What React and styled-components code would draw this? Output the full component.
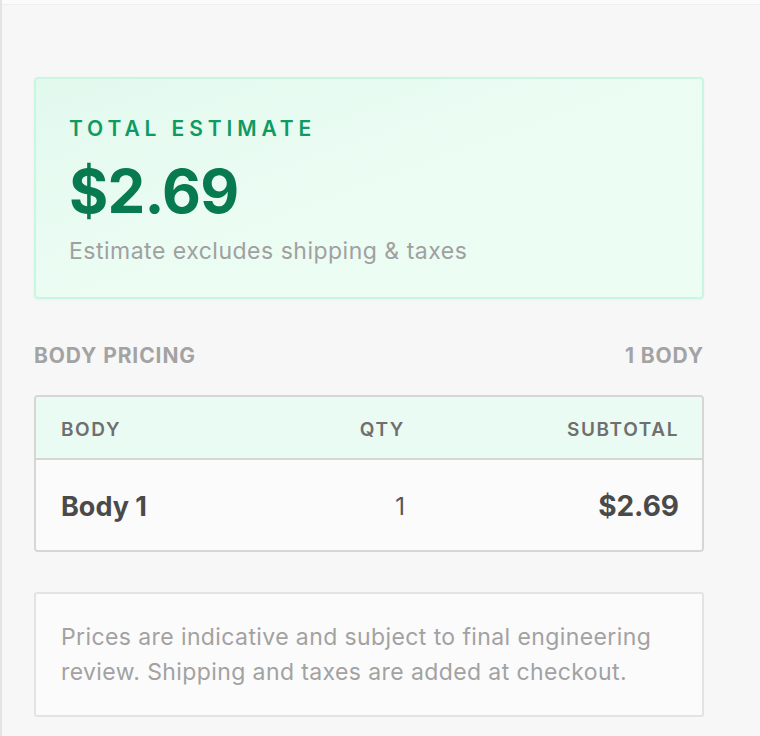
import React from "react";
import styled, { createGlobalStyle } from "styled-components";

const Global = createGlobalStyle`
  html, body { margin: 0; padding: 0; background: #f7f7f7; }
  body { font-family: Inter, "Noto Sans", "Liberation Sans", sans-serif; -webkit-font-smoothing: antialiased; }
  * { box-sizing: border-box; }
`;

const Page = styled.div`
  min-height: 736px;
  border-left: 2px solid #e4e4e4;
  background: #f7f7f7;
`;

const TopStrip = styled.div`
  height: 5px;
  background: #fbfbfb;
  border-bottom: 1px solid #efefef;
`;

const Content = styled.main`
  padding: 72px 56px 20px 32px;
  display: flex;
  flex-direction: column;
`;

const TotalCard = styled.section`
  border: 2px solid #c9f6e0;
  border-radius: 4px;
  background: linear-gradient(160deg, #e2f9ee 0%, #ebfcf3 45%, #ecfdf4 100%);
  box-shadow: 0 1px 3px rgba(0, 0, 0, 0.04);
  padding: 37px 33px 20px;
  height: 222px;
`;

const Eyebrow = styled.div`
  font-size: 21px;
  font-weight: 600;
  letter-spacing: 4.9px;
  color: #0f9a63;
  line-height: 26px;
`;

const BigPrice = styled.div`
  font-size: 60px;
  font-weight: 700;
  letter-spacing: -0.8px;
  color: #087a4f;
  line-height: 72px;
  margin-top: 13px;
`;

const Caption = styled.div`
  font-size: 23px;
  letter-spacing: 0.5px;
  color: #a0a0a0;
  line-height: 30px;
  margin-top: 9px;
`;

const SectionHead = styled.div`
  display: flex;
  justify-content: space-between;
  align-items: center;
  margin-top: 43px;
  font-size: 21px;
  font-weight: 700;
  color: #a3a3a3;
  line-height: 28px;
  letter-spacing: 0.9px;
`;

const Table = styled.div`
  margin-top: 25px;
  border: 2px solid #d6d6d6;
  border-radius: 4px;
  overflow: hidden;
  background: #fbfbfb;
`;

const Row = styled.div`
  display: grid;
  grid-template-columns: 1fr 90px 274px;
  align-items: center;
  padding: ${(p) => (p.$head ? "3px 23px 0 25px" : "2px 23px 0 25px")};
  height: ${(p) => p.$h}px;
  background: ${(p) => (p.$head ? "#e9fbf2" : "#fbfbfb")};
  border-bottom: ${(p) => (p.$head ? "2px solid #d6d6d6" : "none")};
`;

const HeadCell = styled.div`
  font-size: 19px;
  font-weight: 600;
  letter-spacing: 1.6px;
  color: #6f6f6f;
  text-align: ${(p) => p.$align || "left"};
`;

const NameCell = styled.div`
  font-size: 27px;
  font-weight: 700;
  color: #4a4a4a;
`;

const QtyCell = styled.div`
  font-size: 24px;
  color: #555;
  text-align: right;
`;

const PriceCell = styled.div`
  font-size: 28px;
  font-weight: 700;
  color: #4a4a4a;
  text-align: right;
`;

const Note = styled.div`
  margin-top: 40px;
  border: 2px solid #e3e3e3;
  border-radius: 3px;
  background: #fbfbfb;
  padding: 26px 25px 25px;
  font-size: 23px;
  letter-spacing: 0.4px;
  line-height: 35px;
  color: #a2a2a2;
`;

export default function App() {
  return (
    <>
      <Global />
      <Page>
        <TopStrip />
        <Content>
          <TotalCard>
            <Eyebrow>TOTAL ESTIMATE</Eyebrow>
            <BigPrice>$2.69</BigPrice>
            <Caption>Estimate excludes shipping &amp; taxes</Caption>
          </TotalCard>
          <SectionHead>
            <span>BODY PRICING</span>
            <span>1 BODY</span>
          </SectionHead>
          <Table>
            <Row $head $h={63}>
              <HeadCell>BODY</HeadCell>
              <HeadCell $align="right">QTY</HeadCell>
              <HeadCell $align="right">SUBTOTAL</HeadCell>
            </Row>
            <Row $h={90}>
              <NameCell>Body 1</NameCell>
              <QtyCell>1</QtyCell>
              <PriceCell>$2.69</PriceCell>
            </Row>
          </Table>
          <Note>
            Prices are indicative and subject to final engineering review. Shipping and taxes are added at checkout.
          </Note>
        </Content>
      </Page>
    </>
  );
}
